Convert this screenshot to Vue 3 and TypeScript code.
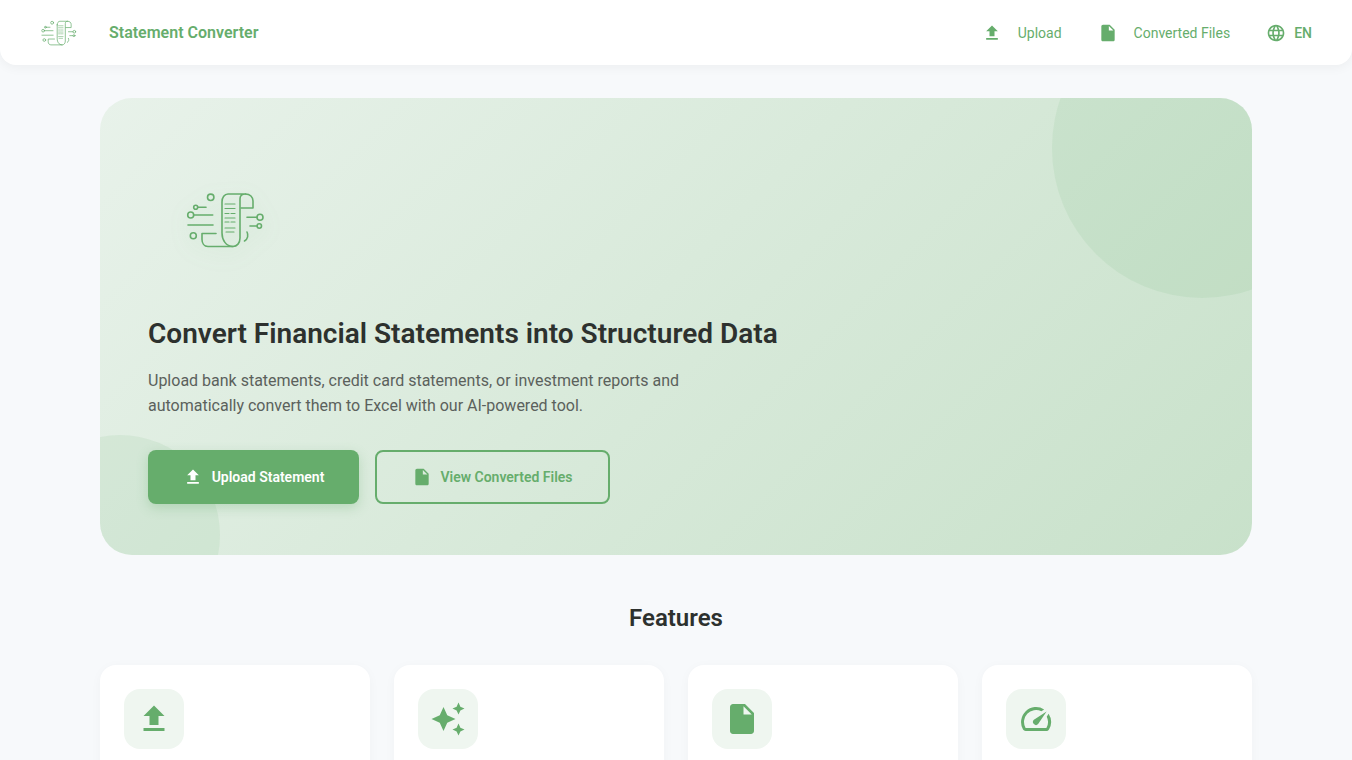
<script setup lang="ts">
const icons = {
  upload: 'M9 16h6v-6h4l-7-7-7 7h4zm-4 2h14v2H5z',
  file: 'M6 2c-1.1 0-1.99.9-1.99 2L4 20c0 1.1.89 2 1.99 2H18c1.1 0 2-.9 2-2V8l-6-6H6zm7 7V3.5L18.5 9H13z',
  sparkle: 'M19 9l1.25-2.75L23 5l-2.75-1.25L19 1l-1.25 2.75L15 5l2.75 1.25L19 9zm-7.5.5L9 4 6.5 9.5 1 12l5.5 2.5L9 20l2.5-5.5L17 12l-5.5-2.5zM19 15l-1.25 2.75L15 19l2.75 1.25L19 23l1.25-2.75L23 19l-2.75-1.25L19 15z',
  speed: 'M20.38 8.57l-1.23 1.85a8 8 0 0 1-.22 7.58H5.07A8 8 0 0 1 15.58 6.85l1.85-1.23A10 10 0 0 0 3.35 19a2 2 0 0 0 1.72 1h13.85a2 2 0 0 0 1.74-1 10 10 0 0 0-.27-10.44zm-9.79 6.84a2 2 0 0 0 2.83 0l5.66-8.49-8.49 5.66a2 2 0 0 0 0 2.83z',
  globe: 'M11.99 2C6.47 2 2 6.48 2 12s4.47 10 9.99 10C17.52 22 22 17.52 22 12S17.52 2 11.99 2zm6.93 6h-2.95c-.32-1.25-.78-2.45-1.38-3.56 1.84.63 3.37 1.91 4.33 3.56zM12 4.04c.83 1.2 1.48 2.53 1.91 3.96h-3.82c.43-1.43 1.08-2.76 1.91-3.96zM4.26 14C4.1 13.36 4 12.69 4 12s.1-1.36.26-2h3.38c-.08.66-.14 1.32-.14 2 0 .68.06 1.34.14 2H4.26zm.82 2h2.95c.32 1.25.78 2.45 1.38 3.56-1.84-.63-3.37-1.9-4.33-3.56zm2.95-8H5.08c.96-1.66 2.49-2.93 4.33-3.56C8.81 5.55 8.35 6.75 8.03 8zM12 19.96c-.83-1.2-1.48-2.53-1.91-3.96h3.82c-.43 1.43-1.08 2.76-1.91 3.96zM14.34 14H9.66c-.09-.66-.16-1.32-.16-2 0-.68.07-1.35.16-2h4.68c.09.65.16 1.32.16 2 0 .68-.07 1.34-.16 2zm.25 5.56c.6-1.11 1.06-2.31 1.38-3.56h2.95c-.96 1.65-2.49 2.93-4.33 3.56zM16.36 14c.08-.66.14-1.32.14-2 0-.68-.06-1.34-.14-2h3.38c.16.64.26 1.31.26 2s-.1 1.36-.26 2h-3.38z'
}
const features: string[] = [icons.upload, icons.sparkle, icons.file, icons.speed]
</script>

<template>
  <div class="page">
    <svg width="0" height="0" class="defs">
      <symbol id="logo" viewBox="14 14 84 60">
        <g fill="none" stroke="#66ad6c" stroke-width="1.6" stroke-linecap="round" stroke-linejoin="round">
          <circle cx="40.7" cy="22.3" r="3.2" />
          <circle cx="25.7" cy="32.3" r="2" />
          <path d="M27.7 32.3H36" />
          <circle cx="20.7" cy="40" r="3" />
          <path d="M23.7 40H42.7" />
          <path d="M18 50H43" />
          <circle cx="23.3" cy="60.7" r="3" />
          <circle cx="90" cy="42.3" r="3" />
          <path d="M77 42.3H87" />
          <circle cx="89.3" cy="51" r="2.2" />
          <path d="M80 51H87" />
          <path d="M77 57C78.5 60 78 64 74.5 66" />
          <path d="M52 27V58C52 65 56 71.5 63 71.5C67 71.5 70 68 70 63V24C70 21 72 19 75.5 19H58C54.5 19 52 22.5 52 27Z" />
          <path d="M75.5 19C80 19 83 22 83 26V33H71" />
          <path d="M63 71.500H38C34 71.500 32 68 32 64.500V58.500H46" />
          <path d="M55 29H65M55 33.500H65M55 38.500H59M61 38.500H65M55 43H65M55 47H59M61 47H65M55 53H65M56 57H64" stroke-width="1.200" />
        </g>
      </symbol>
    </svg>

    <header class="topbar">
      <div class="brand">
        <svg class="brand-logo"><use href="#logo" /></svg>
        <span class="brand-name">Statement Converter</span>
      </div>
      <nav class="nav">
        <a class="nav-item">
          <svg class="nav-icon" viewBox="0 0 24 24"><path :d="icons.upload" /></svg>
          <span>Upload</span>
        </a>
        <a class="nav-item">
          <svg class="nav-icon" viewBox="0 0 24 24"><path :d="icons.file" /></svg>
          <span>Converted Files</span>
        </a>
        <a class="lang">
          <svg class="nav-icon" viewBox="0 0 24 24"><path :d="icons.globe" /></svg>
          <span>EN</span>
        </a>
      </nav>
    </header>

    <main class="main">
      <section class="hero">
        <div class="blob blob-top"></div>
        <div class="blob blob-bottom"></div>
        <div class="hero-body">
          <div class="hero-logo-wrap">
            <svg class="hero-logo"><use href="#logo" /></svg>
          </div>
          <h1>Convert Financial Statements into Structured Data</h1>
          <p>Upload bank statements, credit card statements, or investment reports and automatically convert them to Excel with our AI-powered tool.</p>
          <div class="actions">
            <button class="btn btn-primary">
              <svg viewBox="0 0 24 24"><path :d="icons.upload" /></svg>
              Upload Statement
            </button>
            <button class="btn btn-outline">
              <svg viewBox="0 0 24 24"><path :d="icons.file" /></svg>
              View Converted Files
            </button>
          </div>
        </div>
      </section>

      <h2>Features</h2>

      <div class="grid">
        <div v-for="(d, i) in features" :key="i" class="card">
          <div class="card-icon">
            <svg viewBox="0 0 24 24"><path :d="d" /></svg>
          </div>
        </div>
      </div>
    </main>
  </div>
</template>

<style>
html, body { margin: 0; height: 760px; overflow: hidden; background: #f7f9fb; }
</style>

<style scoped>
.page {
  font-family: Roboto, "Liberation Sans", sans-serif;
  background: #f7f9fb;
  height: 760px;
  overflow: hidden;
}
.defs { position: absolute; }
.topbar {
  height: 65px;
  box-sizing: border-box;
  padding: 0 40px;
  display: flex;
  align-items: center;
  justify-content: space-between;
  background: #fff;
  border-radius: 0 0 16px 16px;
  box-shadow: 0 2px 12px rgba(0, 0, 0, 0.05);
}
.brand { display: flex; align-items: center; gap: 31px; }
.brand-logo { width: 38px; height: 27px; display: block; }
.brand-name { font-size: 16px; font-weight: 600; color: #66ad6c; }
.nav { display: flex; align-items: center; color: #66ad6c; }
.nav-item {
  display: flex;
  align-items: center;
  gap: 16px;
  font-size: 14px;
  margin-right: 36px;
}
.lang { display: flex; align-items: center; gap: 8px; font-size: 14px; font-weight: 500; }
.nav-icon { width: 20px; height: 20px; fill: #66ad6c; display: block; }

.main { width: 1152px; margin: 0 auto; padding-top: 33px; }
.hero {
  position: relative;
  overflow: hidden;
  height: 457px;
  box-sizing: border-box;
  padding: 48px;
  border-radius: 32px;
  background: linear-gradient(135deg, #e8f2ea 0%, #c8e1ca 100%);
}
.blob { position: absolute; border-radius: 50%; background: rgba(102, 173, 108, 0.1); }
.blob-top { width: 300px; height: 300px; top: -100px; right: -100px; }
.blob-bottom { width: 200px; height: 200px; bottom: -80px; left: -80px; }
.hero-body { position: relative; }
.hero-logo-wrap { width: 156px; height: 146px; display: flex; align-items: center; justify-content: center; margin-bottom: 24px; }
.hero-logo { width: 84px; height: 60px; display: block; filter: drop-shadow(0 6px 10px rgba(102, 173, 108, 0.18)); }
h1 { margin: 0 0 16px; font-size: 28px; line-height: 36px; font-weight: 600; color: #2d312e; }
p { margin: 0 0 32px; width: 560px; font-size: 16px; line-height: 25px; color: #5b615c; }
.actions { display: flex; gap: 16px; }
.btn {
  height: 54px;
  box-sizing: border-box;
  display: flex;
  align-items: center;
  font-family: inherit;
  font-size: 14px;
  font-weight: 600;
  border-radius: 8px;
}
.btn svg { width: 20px; height: 20px; display: block; fill: currentColor; }
.btn-primary {
  width: 211px;
  justify-content: center;
  gap: 9px;
  border: 0;
  color: #fff;
  background: #66ad6c;
  box-shadow: 0 4px 12px rgba(102, 173, 108, 0.3);
}
.btn-outline {
  width: 235px;
  justify-content: center;
  gap: 8px;
  border: 2px solid #66ad6c;
  color: #66ad6c;
  background: transparent;
}
h2 { margin: 48px 0 32px; font-size: 24px; line-height: 30px; font-weight: 600; color: #2d312e; text-align: center; }
.grid { display: grid; grid-template-columns: repeat(4, 1fr); gap: 24px; }
.card {
  background: #fff;
  border-radius: 16px;
  padding: 24px;
  height: 240px;
  box-sizing: border-box;
  box-shadow: 0 2px 12px rgba(0, 0, 0, 0.03);
}
.card-icon {
  width: 60px;
  height: 60px;
  border-radius: 16px;
  background: #eff6f0;
  display: flex;
  align-items: center;
  justify-content: center;
}
.card-icon svg { width: 36px; height: 36px; fill: #66ad6c; display: block; }
</style>
